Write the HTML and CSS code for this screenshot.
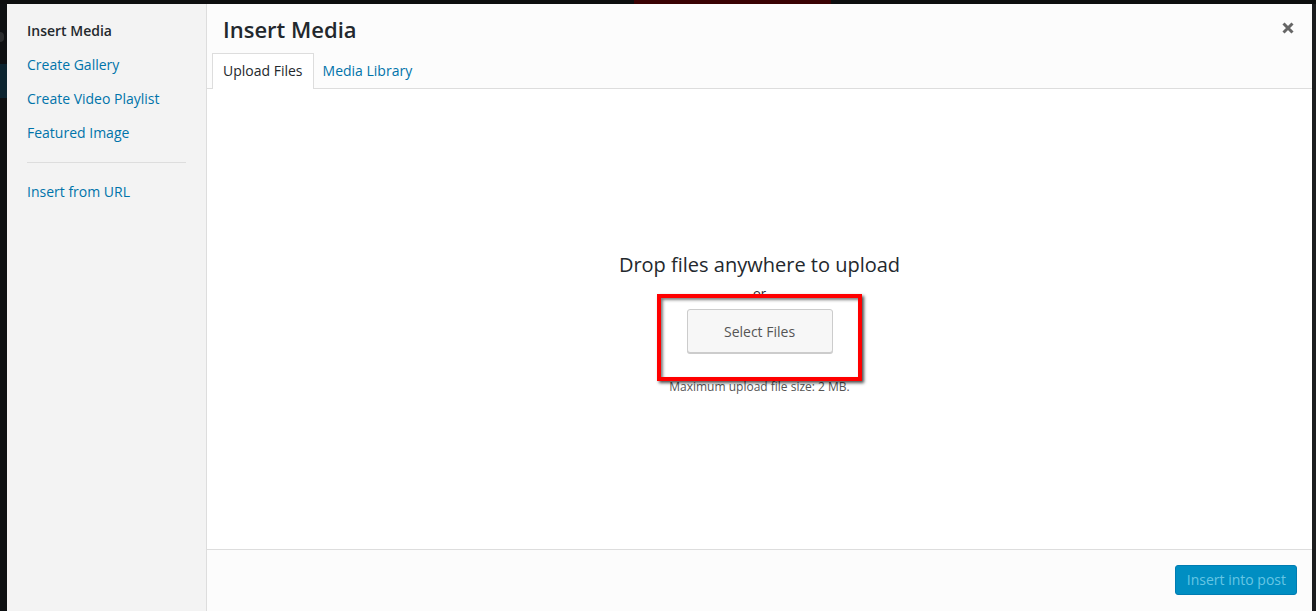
FILE: index.html
```html
<!DOCTYPE html>
<html lang="en">
<head>
<meta charset="utf-8">
<title>Insert Media</title>
<link rel="stylesheet" href="styles.css">
</head>
<body>
<div class="topstrip"><span class="topred"></span></div>
<div class="stage">
  <div class="leftstrip">
    <span class="ls-dot"></span>
    <span class="ls-active"></span>
  </div>
  <div class="modal">
    <aside class="menu">
      <a class="menu-item active">Insert Media</a>
      <a class="menu-item">Create Gallery</a>
      <a class="menu-item">Create Video Playlist</a>
      <a class="menu-item">Featured Image</a>
      <div class="separator"></div>
      <a class="menu-item">Insert from URL</a>
    </aside>
    <main class="frame">
      <header class="frame-title">
        <h1>Insert Media</h1>
        <button class="close" aria-label="Close">
          <svg width="12" height="12" viewBox="0 0 12 12"><path d="M1.5 1.5 L10.5 10.5 M10.5 1.5 L1.5 10.5" stroke="#666" stroke-width="3" stroke-linecap="butt"/></svg>
        </button>
      </header>
      <nav class="router">
        <a class="tab active">Upload Files</a>
        <a class="tab">Media Library</a>
      </nav>
      <section class="content">
        <div class="upload">
          <h2 class="drop-title">Drop files anywhere to upload</h2>
          <p class="or">or</p>
          <div class="select-wrap">
            <button class="select-btn">Select Files</button>
            <span class="highlight"></span>
          </div>
          <p class="max-size">Maximum upload file size: 2 MB.</p>
        </div>
      </section>
      <footer class="toolbar">
        <button class="primary" disabled>Insert into post</button>
      </footer>
    </main>
  </div>
  <div class="rightstrip"></div>
</div>
</body>
</html>
```

FILE: styles.css
```css
* { box-sizing: border-box; }
html, body { height: 100%; }
body {
  margin: 0;
  background: #0d0e0f;
  font-family: "Open Sans", "Noto Sans", sans-serif;
  font-size: 13px;
  color: #23282d;
  display: flex;
  flex-direction: column;
  overflow: hidden;
}
.topstrip {
  height: 4px;
  flex: none;
  display: flex;
}
.topred {
  margin-left: 634px;
  width: 197px;
  background: #3a0203;
}
.stage {
  flex: 1;
  display: flex;
  min-height: 0;
}
.leftstrip {
  width: 7px;
  flex: none;
  background: #0e1012;
  display: flex;
  flex-direction: column;
}
.ls-dot {
  margin-top: 28px;
  height: 10px;
  width: 4px;
  background: #2a2c2e;
  border-radius: 0 5px 5px 0;
}
.ls-active {
  margin-top: 22px;
  height: 34px;
  background: #0c2430;
}
.rightstrip {
  width: 4px;
  flex: none;
  background: #1c1d1f;
}
.modal {
  flex: 1;
  display: flex;
  background: #fff;
  min-width: 0;
}
.menu {
  width: 200px;
  flex: none;
  background: #f3f3f3;
  border-right: 1px solid #ddd;
  padding-top: 10px;
  display: flex;
  flex-direction: column;
}
.menu-item {
  display: block;
  padding: 8px 20px;
  font-size: 14px;
  line-height: 18px;
  color: #0073aa;
  text-decoration: none;
}
.menu-item.active { color: #23282d; font-weight: 600; }
.separator {
  height: 1px;
  background: #ddd;
  margin: 12px 20px;
}
.frame {
  flex: 1;
  display: flex;
  flex-direction: column;
  min-width: 0;
}
.frame-title {
  height: 50px;
  flex: none;
  background: #fcfcfc;
  display: flex;
  align-items: center;
  justify-content: space-between;
  padding: 0 16px;
}
.frame-title h1 {
  margin: 0;
  font-size: 22px;
  font-weight: 600;
  line-height: 50px;
  color: #23282d;
}
.close {
  border: 0;
  background: none;
  padding: 0;
  width: 12px;
  height: 12px;
  display: flex;
  margin-right: 2px;
  margin-top: -2px;
}
.router {
  height: 35px;
  flex: none;
  background: #fcfcfc;
  border-bottom: 1px solid #ddd;
  display: flex;
  align-items: flex-end;
  padding-left: 5px;
}
.tab {
  display: block;
  font-size: 14px;
  line-height: 34px;
  padding: 0 10px;
  color: #0073aa;
  margin-bottom: -1px;
  border: 1px solid transparent;
  border-bottom: 0;
}
.tab.active {
  background: #fff;
  border-color: #ddd;
  color: #23282d;
  height: 36px;
}
.tab + .tab { padding-left: 9px; border: 0; line-height: 36px; }
.content {
  flex: 1;
  background: #fff;
  display: flex;
  justify-content: center;
  min-height: 0;
}
.upload {
  padding-top: 162px;
  display: flex;
  flex-direction: column;
  align-items: center;
}
.drop-title {
  margin: 0;
  font-size: 20px;
  font-weight: 400;
  line-height: 28px;
  color: #23282d;
}
.or {
  margin: 5px 0 0;
  font-size: 13px;
  line-height: 18px;
  color: #23282d;
}
.select-wrap {
  position: relative;
  margin-top: 7px;
}
.select-btn {
  display: block;
  width: 146px;
  height: 44px;
  font-family: inherit;
  font-size: 14px;
  color: #555;
  background: #f7f7f7;
  border: 1px solid #ccc;
  border-radius: 3px;
  box-shadow: 0 1px 0 #ccc;
  padding: 0;
}
.highlight {
  position: absolute;
  left: -30px;
  top: -15px;
  right: -29px;
  bottom: -28px;
  border: 4px solid #ff0000;
  box-shadow: 2px 2px 3px rgba(0,0,0,0.7), inset 2px 2px 3px rgba(0,0,0,0.5);
  pointer-events: none;
}
.max-size {
  margin: 25px 0 0;
  font-size: 12px;
  line-height: 18px;
  color: #555;
}
.toolbar {
  height: 62px;
  flex: none;
  background: #fcfcfc;
  border-top: 1px solid #ddd;
  display: flex;
  justify-content: flex-end;
  align-items: flex-start;
  padding: 15px 15px 0 0;
}
.primary {
  height: 30px;
  padding: 0 10px 0 11px;
  font-family: inherit;
  font-size: 14px;
  line-height: 28px;
  background: #008ec2;
  border: 1px solid #007cb2;
  color: #66c6e4;
  border-radius: 3px;
}
```
